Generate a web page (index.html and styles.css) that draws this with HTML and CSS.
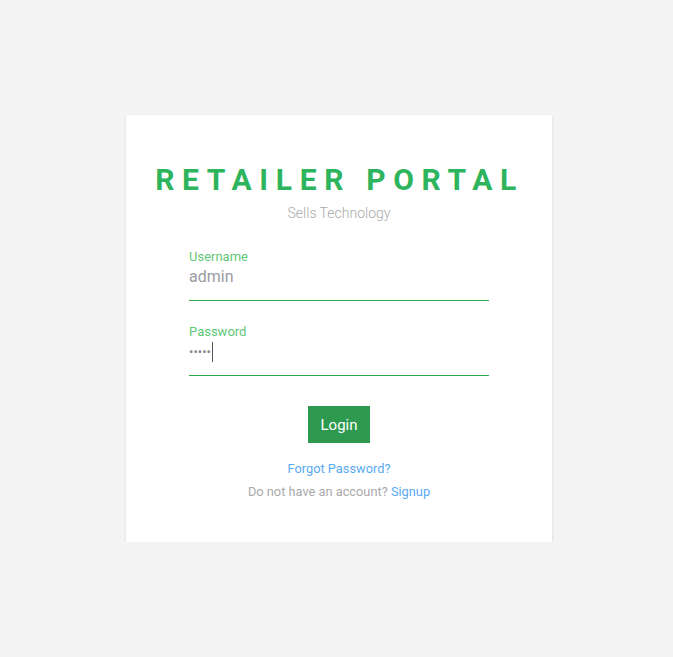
FILE: index.html
```html
<!DOCTYPE html>
<html>
<head>
<meta charset="utf-8">
<link rel="stylesheet" href="styles.css">
</head>
<body>
<div class="page">
  <div class="card">
    <h1 class="title">RETAILER PORTAL</h1>
    <div class="subtitle">Sells Technology</div>
    <form class="form">
      <div class="field">
        <label class="label">Username</label>
        <div class="value">admin</div>
      </div>
      <div class="field">
        <label class="label">Password</label>
        <div class="value"><span class="dots">•••••</span><span class="caret"></span></div>
      </div>
      <div class="actions">
        <button type="button" class="btn">Login</button>
      </div>
      <div class="links">
        <a class="link">Forgot Password?</a>
        <div class="signup">Do not have an account? <a class="link">Signup</a></div>
      </div>
    </form>
  </div>
</div>
</body>
</html>
```
FILE: styles.css
```css
html, body {
  margin: 0;
  padding: 0;
  background: #f4f4f4;
  font-family: Roboto, "Liberation Sans", sans-serif;
}
.page {
  display: flex;
  justify-content: center;
  padding-top: 115px;
  padding-left: 5px;
}
.card {
  width: 426px;
  height: 427px;
  box-sizing: border-box;
  background: #fff;
  box-shadow: 0 1px 3px rgba(0,0,0,0.12);
  display: flex;
  flex-direction: column;
  align-items: center;
  padding-top: 47px;
}
.title {
  margin: 0;
  font-size: 30px;
  font-weight: 700;
  color: #2db45c;
  letter-spacing: 7.65px;
  line-height: 36px;
  padding-left: 1px;
}
.subtitle {
  margin-top: 6px;
  font-size: 14px;
  font-weight: 300;
  color: #a9a9a9;
  line-height: 18px;
}
.form {
  width: 300px;
  margin-top: 27px;
  display: flex;
  flex-direction: column;
}
.field {
  display: flex;
  flex-direction: column;
  border-bottom: 1px solid #2ca84f;
  height: 51px;
  margin-bottom: 23px;
}
.label {
  font-size: 13px;
  color: #5fc878;
  line-height: 15px;
}
.value {
  font-size: 16px;
  color: #9c9ca4;
  line-height: 22px;
  margin-top: 2px;
  display: flex;
  align-items: center;
}
.dots {
  font-size: 13px;
  letter-spacing: 0;
  color: #888;
}
.caret {
  display: inline-block;
  width: 1px;
  height: 20px;
  background: #555;
  margin-left: 1px;
}
.actions {
  display: flex;
  justify-content: center;
  margin-top: 7px;
}
.btn {
  width: 62px;
  height: 37px;
  border: none;
  background: #2e9a4f;
  color: #fff;
  font-family: Roboto, sans-serif;
  font-size: 15px;
  padding: 0;
  border-radius: 0;
}
.links {
  margin-top: 14px;
  display: flex;
  flex-direction: column;
  align-items: center;
  font-size: 12.8px;
  line-height: 23px;
}
.link {
  color: #5aaaf0;
  cursor: pointer;
}
.signup {
  color: #aaa;
}
```
